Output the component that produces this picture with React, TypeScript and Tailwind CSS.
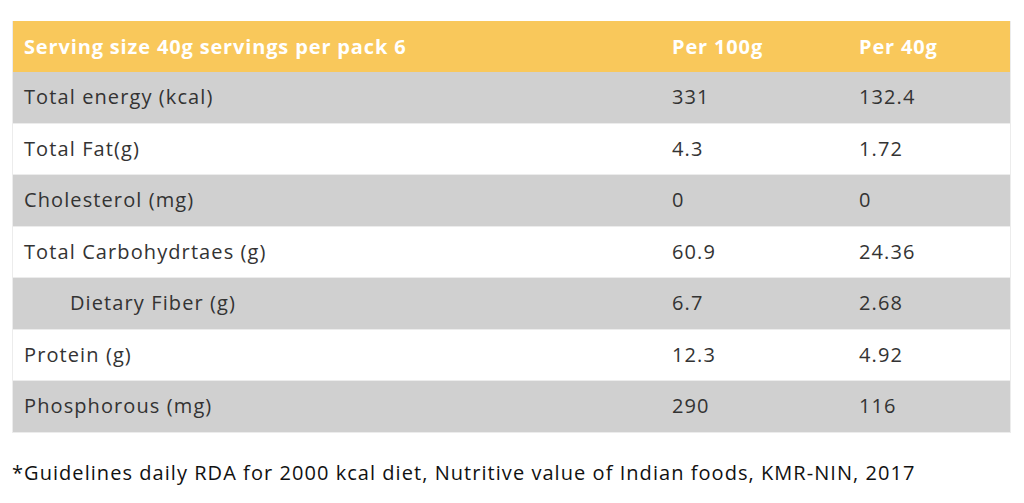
const rows = [
  { name: "Total energy (kcal)", per100: "331", per40: "132.4" },
  { name: "Total Fat(g)", per100: "4.3", per40: "1.72" },
  { name: "Cholesterol (mg)", per100: "0", per40: "0" },
  { name: "Total Carbohydrtaes (g)", per100: "60.9", per40: "24.36" },
  { name: "Dietary Fiber (g)", per100: "6.7", per40: "2.68", indent: true },
  { name: "Protein (g)", per100: "12.3", per40: "4.92" },
  { name: "Phosphorous (mg)", per100: "290", per40: "116" },
]

export default function App() {
  return (
    <div
      className="min-h-[503px] bg-white pt-[21px] pl-[12px] pr-[13px]"
      style={{ fontFamily: '"Open Sans", "Noto Sans", sans-serif' }}
    >
      <div className="border-x border-[#ececec]">
        {/* Header */}
        <div className="grid h-[51px] grid-cols-[647px_187px_1fr] items-center bg-[#f9c85b] text-[20px] font-bold tracking-[0.85px] text-white">
          <div className="pl-[11px]">Serving size 40g servings per pack 6</div>
          <div className="pl-[12px]">Per 100g</div>
          <div className="pl-[12px]">Per 40g</div>
        </div>

        {rows.map((row, i) => (
          <div
            key={row.name}
            className={
              "grid h-[51.5px] grid-cols-[647px_187px_1fr] items-center border-b border-[#ececec] text-[20px] tracking-[1.1px] text-[#333] " +
              (i % 2 === 0 ? "bg-[#d0d0d0]" : "bg-white")
            }
          >
            <div className={row.indent ? "pl-[57px]" : "pl-[11px]"}>{row.name}</div>
            <div className="pl-[12px]">{row.per100}</div>
            <div className="pl-[12px]">{row.per40}</div>
          </div>
        ))}
      </div>

      <p className="mt-[26px] text-[20px] leading-[28px] tracking-[1.05px] text-[#111]">
        *Guidelines daily RDA for 2000 kcal diet, Nutritive value of Indian foods, KMR-NIN, 2017
      </p>
    </div>
  )
}
